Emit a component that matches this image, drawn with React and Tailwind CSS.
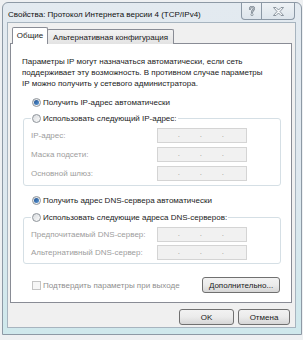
import React from 'react'

function Radio({ checked }) {
  return (
    <span className="relative inline-flex w-[9px] h-[9px] shrink-0 items-center justify-center rounded-full border border-[#8f959b] bg-gradient-to-br from-[#d9dcdf] to-[#fbfbfb]">
      {checked && <span className="w-[5px] h-[5px] rounded-full bg-gradient-to-br from-[#1f4f8f] to-[#5c9ad6]" />}
    </span>
  )
}

function IpBox() {
  return (
    <div className="flex w-[90px] h-[15px] border border-[#d4d4d4] bg-[#f1f1f1]">
      {[0, 1, 2, 3].map((i) => (
        <div key={i} className="flex-1 flex items-end justify-end pb-[3px] text-[#9a9a9a] leading-[8px]">
          {i < 3 ? '.' : ''}
        </div>
      ))}
    </div>
  )
}

function Button({ children, className = '' }) {
  return (
    <div className={`flex items-center justify-center h-[16px] rounded-[3px] border border-[#707070] bg-gradient-to-b from-[#f2f2f2] via-[#ebebeb] to-[#d6d6d6] text-[#1a1a1a] ${className}`}>
      {children}
    </div>
  )
}

export default function App() {
  return (
    <div className="w-[303px] h-[340px] overflow-hidden bg-[#eef0f2] pt-[2px] pl-[2px] font-['Liberation_Sans',Arial,sans-serif] text-[8px] leading-[11px] text-[#1b1b1b]">
      <div className="w-[300px] h-[333px] flex flex-col rounded-t-[6px] border border-[#8d99a5] bg-gradient-to-b from-[#e3eaf0] via-[#dfe8ef] to-[#cfe8ec]">
        {/* title bar */}
        <div className="h-[19px] flex items-start">
          <div className="pl-[5px] pt-[6px] text-[#111]">Свойства: Протокол Интернета версии 4 (TCP/IPv4)</div>
          <div className="ml-auto mr-[6px] flex h-[17px] rounded-b-[4px] border border-t-0 border-[#8b98a5] bg-gradient-to-b from-[#eef2f5] to-[#dde5ec]">
            <div className="w-[20px] flex items-center justify-center border-r border-[#8b98a5]">
              <svg width="8" height="10" viewBox="0 0 8 10">
                <path d="M2 3 C2 1.6 2.9 1 4 1 C5.2 1 6 1.8 6 2.8 C6 4.1 4 4.3 4 6.2" fill="none" stroke="#6f7b87" strokeWidth="2.2" strokeLinecap="round" />
                <path d="M2 3 C2 1.6 2.9 1 4 1 C5.2 1 6 1.8 6 2.8 C6 4.1 4 4.3 4 6.2" fill="none" stroke="#f3f5f7" strokeWidth="0.7" strokeLinecap="round" />
                <circle cx="4" cy="8.6" r="1.1" fill="#f3f5f7" stroke="#6f7b87" strokeWidth="0.7" />
              </svg>
            </div>
            <div className="w-[32px] flex items-center justify-center">
              <svg width="11" height="9" viewBox="0 0 11 9">
                <polygon points="0.5,0.5 3,0.5 5.5,3 8,0.5 10.5,0.5 7,4.5 10.5,8.5 8,8.5 5.5,6 3,8.5 0.5,8.5 4,4.5" fill="#f4f6f8" stroke="#75808b" strokeWidth="0.8" strokeLinejoin="round" />
              </svg>
            </div>
          </div>
        </div>

        {/* client area */}
        <div className="flex-1 ml-[4px] mr-[5px] mb-[6px] flex flex-col border border-[#a7b4bf] bg-[#f0f0f0]">
          {/* tabs */}
          <div className="mt-[4px] ml-[4px] flex items-end relative z-10 -mb-px">
            <div className="w-[36px] h-[17px] flex items-center justify-center rounded-t-[2px] border border-b-0 border-[#898c95] bg-white pb-[2px]">Общие</div>
            <div className="-ml-px h-[15px] px-[5px] flex items-center rounded-t-[2px] border border-b-0 border-[#898c95] bg-gradient-to-b from-[#f3f3f3] to-[#e3e3e3]">Альтернативная конфигурация</div>
          </div>

          {/* panel */}
          <div className="ml-[2px] mr-[3px] flex flex-col border border-[#898c95] bg-white">
            <p className="mt-[12px] pl-[11px]">
              Параметры IP могут назначаться автоматически, если сеть<br />
              поддерживает эту возможность. В противном случае параметры<br />
              IP можно получить у сетевого администратора.
            </p>

            <div className="mt-[8px] pl-[21px] h-[11px] flex items-center gap-[2px]">
              <Radio checked />
              <span>Получить IP-адрес автоматически</span>
            </div>

            <fieldset className="mt-[4px] ml-[12px] mr-[10px] border border-[#d5dfe5] rounded-[3px] pl-[7px] pb-[4px]">
              <legend className="px-[1px] h-[12px] flex items-center gap-[2px]">
                <Radio />
                <span>Использовать следующий IP-адрес:</span>
              </legend>
              <div className="pt-[4px] flex flex-col gap-[4px] text-[#9d9d9d]">
                <div className="flex items-center h-[15px]">
                  <span className="w-[126px]">IP-адрес:</span>
                  <IpBox />
                </div>
                <div className="flex items-center h-[15px]">
                  <span className="w-[126px]">Маска подсети:</span>
                  <IpBox />
                </div>
                <div className="flex items-center h-[15px]">
                  <span className="w-[126px]">Основной шлюз:</span>
                  <IpBox />
                </div>
              </div>
            </fieldset>

            <div className="mt-[9px] pl-[21px] h-[11px] flex items-center gap-[2px]">
              <Radio checked />
              <span>Получить адрес DNS-сервера автоматически</span>
            </div>

            <fieldset className="mt-[5px] ml-[12px] mr-[10px] border border-[#d5dfe5] rounded-[3px] pl-[7px] pb-[4px]">
              <legend className="px-[1px] h-[12px] flex items-center gap-[2px]">
                <Radio />
                <span>Использовать следующие адреса DNS-серверов:</span>
              </legend>
              <div className="pt-[4px] flex flex-col gap-[4px] text-[#9d9d9d]">
                <div className="flex items-center h-[14px]">
                  <span className="w-[126px]">Предпочитаемый DNS-сервер:</span>
                  <IpBox />
                </div>
                <div className="flex items-center h-[14px]">
                  <span className="w-[126px]">Альтернативный DNS-сервер:</span>
                  <IpBox />
                </div>
              </div>
            </fieldset>

            <div className="mt-[13px] mb-[9px] ml-[21px] mr-[11px] flex items-center">
              <span className="w-[9px] h-[9px] border border-[#c4c4c4] bg-[#f6f6f6]" />
              <span className="ml-[2px] text-[#8f8f8f]">Подтвердить параметры при выходе</span>
              <Button className="ml-auto w-[78px]">Дополнительно...</Button>
            </div>
          </div>

          {/* footer */}
          <div className="mt-[6px] mr-[5px] flex justify-end gap-[4px]">
            <Button className="w-[55px]">OK</Button>
            <Button className="w-[52px]">Отмена</Button>
          </div>
        </div>
      </div>
    </div>
  )
}
